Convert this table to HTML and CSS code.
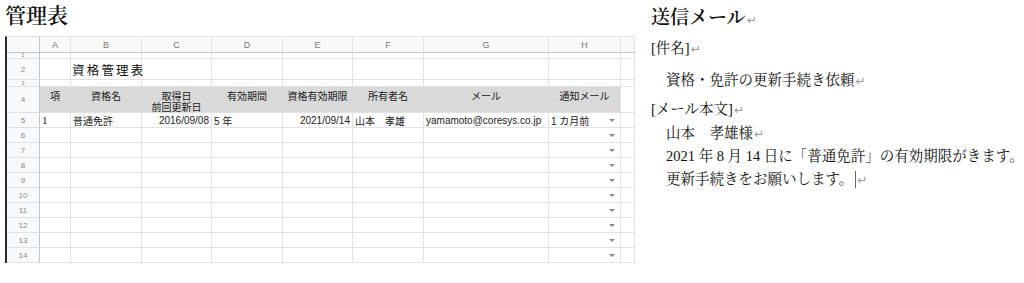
FILE: index.html
```html
<!DOCTYPE html>
<html lang="ja">
<head>
<meta charset="utf-8">
<link rel="stylesheet" href="styles.css">
</head>
<body>
<div class="page">
  <section class="left">
    <h1 class="title">管理表</h1>
    <div class="sheet">
      <!-- column headers -->
      <div class="corner"></div>
      <div class="ch">A</div><div class="ch">B</div><div class="ch">C</div><div class="ch">D</div>
      <div class="ch">E</div><div class="ch">F</div><div class="ch">G</div><div class="ch">H</div><div class="ch"></div>
      <!-- row 1 -->
      <div class="rh rh-tiny">1</div>
      <div class="c"></div><div class="c"></div><div class="c"></div><div class="c"></div>
      <div class="c"></div><div class="c"></div><div class="c"></div><div class="c"></div><div class="c"></div>
      <!-- row 2 -->
      <div class="rh">2</div>
      <div class="c"></div><div class="c sheet-title">資格管理表</div><div class="c"></div><div class="c"></div>
      <div class="c"></div><div class="c"></div><div class="c"></div><div class="c"></div><div class="c"></div>
      <!-- row 3 -->
      <div class="rh rh-tiny">3</div>
      <div class="c"></div><div class="c"></div><div class="c"></div><div class="c"></div>
      <div class="c"></div><div class="c"></div><div class="c"></div><div class="c"></div><div class="c"></div>
      <!-- row 4 -->
      <div class="rh">4</div>
      <div class="c hd">項</div><div class="c hd">資格名</div><div class="c hd">取得日<br>前回更新日</div><div class="c hd">有効期間</div>
      <div class="c hd">資格有効期限</div><div class="c hd">所有者名</div><div class="c hd">メール</div><div class="c hd hd-last">通知メール</div><div class="c"></div>
      <!-- row 5 -->
      <div class="rh">5</div>
      <div class="c serif">1</div><div class="c">普通免許</div><div class="c num">2016/09/08</div><div class="c">5 年</div>
      <div class="c num">2021/09/14</div><div class="c">山本　孝雄</div><div class="c">yamamoto@coresys.co.jp</div><div class="c dd"><span>1 カ月前</span><span class="arrow"></span></div><div class="c"></div>
      <!-- rows 6-14 -->
      <div class="rh">6</div><div class="c"></div><div class="c"></div><div class="c"></div><div class="c"></div><div class="c"></div><div class="c"></div><div class="c"></div><div class="c dd"><span></span><span class="arrow"></span></div><div class="c"></div>
      <div class="rh">7</div><div class="c"></div><div class="c"></div><div class="c"></div><div class="c"></div><div class="c"></div><div class="c"></div><div class="c"></div><div class="c dd"><span></span><span class="arrow"></span></div><div class="c"></div>
      <div class="rh">8</div><div class="c"></div><div class="c"></div><div class="c"></div><div class="c"></div><div class="c"></div><div class="c"></div><div class="c"></div><div class="c dd"><span></span><span class="arrow"></span></div><div class="c"></div>
      <div class="rh">9</div><div class="c"></div><div class="c"></div><div class="c"></div><div class="c"></div><div class="c"></div><div class="c"></div><div class="c"></div><div class="c dd"><span></span><span class="arrow"></span></div><div class="c"></div>
      <div class="rh">10</div><div class="c"></div><div class="c"></div><div class="c"></div><div class="c"></div><div class="c"></div><div class="c"></div><div class="c"></div><div class="c dd"><span></span><span class="arrow"></span></div><div class="c"></div>
      <div class="rh">11</div><div class="c"></div><div class="c"></div><div class="c"></div><div class="c"></div><div class="c"></div><div class="c"></div><div class="c"></div><div class="c dd"><span></span><span class="arrow"></span></div><div class="c"></div>
      <div class="rh">12</div><div class="c"></div><div class="c"></div><div class="c"></div><div class="c"></div><div class="c"></div><div class="c"></div><div class="c"></div><div class="c dd"><span></span><span class="arrow"></span></div><div class="c"></div>
      <div class="rh">13</div><div class="c"></div><div class="c"></div><div class="c"></div><div class="c"></div><div class="c"></div><div class="c"></div><div class="c"></div><div class="c dd"><span></span><span class="arrow"></span></div><div class="c"></div>
      <div class="rh">14</div><div class="c"></div><div class="c"></div><div class="c"></div><div class="c"></div><div class="c"></div><div class="c"></div><div class="c"></div><div class="c dd"><span></span><span class="arrow"></span></div><div class="c"></div>
    </div>
  </section>
  <section class="mail">
    <h2 class="mail-title">送信メール<span class="ret">↵</span></h2>
    <p class="line subject-label">[件名]<span class="ret">↵</span></p>
    <p class="line indent subject">資格・免許の更新手続き依頼<span class="ret">↵</span></p>
    <div class="body">
      <p class="line">[メール本文]<span class="ret">↵</span></p>
      <p class="line indent">山本　孝雄様<span class="ret">↵</span></p>
      <p class="line indent">2021 年 8 月 14 日に「普通免許」の有効期限がきます。</p>
      <p class="line indent">更新手続きをお願いします。<span class="caret"></span><span class="ret">↵</span></p>
    </div>
  </section>
</div>
</body>
</html>
```

FILE: styles.css
```css
* { box-sizing: border-box; }

html, body {
  margin: 0;
  padding: 0;
  background: #ffffff;
}

.page {
  display: flex;
  width: 1024px;
  height: 283px;
  overflow: hidden;
}

.left {
  width: 640px;
  flex: none;
  padding-left: 5px;
}

.title {
  margin: 0;
  height: 36px;
  padding-top: 1px;
  font-family: "Liberation Serif", "Noto Serif CJK JP", "Noto Sans CJK JP", serif;
  font-size: 21px;
  line-height: 30px;
  font-weight: 600;
  color: #111;
}

.sheet {
  display: grid;
  grid-template-columns: 33px 31px 71px 70px 71px 70px 71px 125px 72px 14px;
  grid-template-rows: 16px 6px 21px 7px 26px 15px repeat(9, 15px);
  border-left: 2px solid #2a2a2a;
  border-top: 1px solid #e2e2e2;
  width: 630px;
  font-family: "Liberation Sans", "Noto Sans CJK JP", sans-serif;
  font-size: 10px;
  color: #222;
}

.corner {
  background: #f8f9fa;
  border-right: 1px solid #c4c4c4;
  border-bottom: 1px solid #c4c4c4;
}

.ch {
  background: #f8f9fa;
  border-right: 1px solid #e2e2e2;
  border-bottom: 1px solid #c4c4c4;
  color: #777;
  font-size: 9px;
  display: flex;
  align-items: center;
  justify-content: center;
}

.rh {
  background: #f8f9fa;
  border-right: 1px solid #c4c4c4;
  border-bottom: 1px solid #e2e2e2;
  color: #888;
  font-size: 8px;
  display: flex;
  align-items: center;
  justify-content: center;
  overflow: hidden;
}

.rh-tiny {
  font-size: 6px;
  line-height: 5px;
}

.c {
  border-right: 1px solid #e2e2e2;
  border-bottom: 1px solid #e2e2e2;
  padding: 0 2px;
  display: flex;
  align-items: center;
  white-space: nowrap;
  min-width: 0;
}

.sheet-title {
  font-size: 12.5px;
  letter-spacing: 2.2px;
  padding-left: 1px;
  overflow: visible;
  color: #111;
}

.hd {
  background: #d9d9d9;
  border-right-color: #d9d9d9;
  border-bottom-color: #e2e2e2;
  align-items: flex-start;
  justify-content: center;
  text-align: center;
  padding-top: 4px;
  line-height: 11px;
}

.hd-last { border-right-color: #e2e2e2; }

.serif {
  font-family: "Liberation Serif", serif;
  font-size: 11px;
}

.num { justify-content: flex-end; }

.dd {
  justify-content: space-between;
  padding-right: 5px;
}

.arrow {
  width: 0;
  height: 0;
  border-left: 3px solid transparent;
  border-right: 3px solid transparent;
  border-top: 3px solid #8a8a8a;
}

.mail {
  flex: 1;
  padding-left: 11px;
  font-family: "Liberation Serif", "Noto Serif CJK JP", "Noto Sans CJK JP", serif;
  color: #111;
}

.mail-title {
  margin: 0;
  height: 36px;
  font-size: 19px;
  line-height: 36px;
  font-weight: 600;
}

.line {
  margin: 0;
  font-size: 14.5px;
  line-height: 22px;
  white-space: nowrap;
}

.subject-label { margin-top: 1px; }
.subject { margin-top: 9px; }
.body { margin-top: 6px; }
.body .line { line-height: 22.6px; }

.indent { padding-left: 15px; }

.ret {
  font-family: "DejaVu Sans", sans-serif;
  font-size: 12px;
  color: #9a9a9a;
  margin-left: 1px;
  font-weight: normal;
}

.caret {
  display: inline-block;
  width: 0;
  height: 17px;
  border-left: 1px solid #666;
  vertical-align: -4px;
  margin-left: 2px;
}
```
